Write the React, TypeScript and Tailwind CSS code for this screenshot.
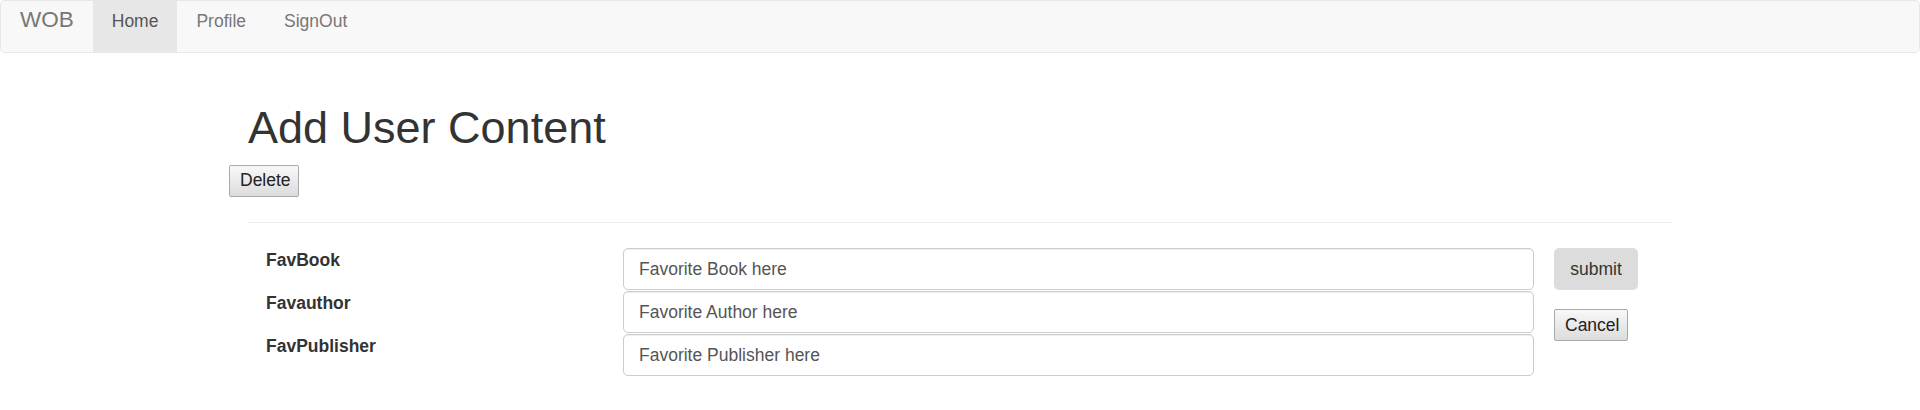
import React from "react";

const font = { fontFamily: '"Liberation Sans", Arial, Helvetica, sans-serif' };

function NavBar() {
  return (
    <nav className="h-[53px] w-full border border-[#e7e7e7] rounded-[5px] bg-[#f8f8f8] flex items-stretch">
      <a className="px-[19px] pt-[4px] text-[22.5px] leading-[30px] text-[#777]">WOB</a>
      <ul className="flex items-stretch">
        <li className="bg-[#e7e7e7] text-[#555] px-[19px] pt-[8px] text-[17.5px] leading-[25px]">Home</li>
        <li className="text-[#777] px-[19px] pt-[8px] text-[17.5px] leading-[25px]">Profile</li>
        <li className="text-[#777] px-[19px] pt-[8px] text-[17.5px] leading-[25px]">SignOut</li>
      </ul>
    </nav>
  );
}

const nativeBtn =
  "h-[32px] px-[10px] text-[17.5px] leading-none text-[#222] border border-[#a9a9a9] rounded-[2px] bg-gradient-to-b from-[#f8f8f8] to-[#dcdcdc]";

const fields = [
  { label: "FavBook", value: "Favorite Book here" },
  { label: "Favauthor", value: "Favorite Author here" },
  { label: "FavPublisher", value: "Favorite Publisher here" },
];

export default function App() {
  return (
    <div className="min-h-[410px] bg-white text-[#333] text-[17.5px]" style={font}>
      <NavBar />
      <div className="w-[1424px] mx-auto">
        <h1 className="mt-[50px] mb-[12.5px] text-[45px] leading-[49.5px] font-normal text-[#333]">
          Add User Content
        </h1>
        <button className={nativeBtn + " -ml-[19px] w-[70px]"}>Delete</button>
        <hr className="mt-[25px] border-0 border-t border-[#eee]" />
        <div className="mt-[25px] flex items-start">
          <div className="flex flex-col gap-[1px]">
            {fields.map((f) => (
              <div key={f.label} className="flex items-start pl-[18px]">
                <label className="w-[357px] font-bold text-[17.5px] leading-[25px] text-[#333]">
                  {f.label}
                </label>
                <input
                  readOnly
                  value={f.value}
                  className="w-[911px] h-[42px] px-[15px] border border-[#ccc] rounded-[5px] text-[17.5px] text-[#555] shadow-[inset_0_1px_1px_rgba(0,0,0,0.075)] outline-none"
                />
              </div>
            ))}
          </div>
          <div className="ml-[20px] flex flex-col items-start">
            <button className="h-[42px] w-[84px] rounded-[5px] bg-[#dcdcdc] text-[17.5px] text-[#333]">
              submit
            </button>
            <button className={nativeBtn + " mt-[19px] w-[74px] pt-[1px]"}>Cancel</button>
          </div>
        </div>
      </div>
    </div>
  );
}
